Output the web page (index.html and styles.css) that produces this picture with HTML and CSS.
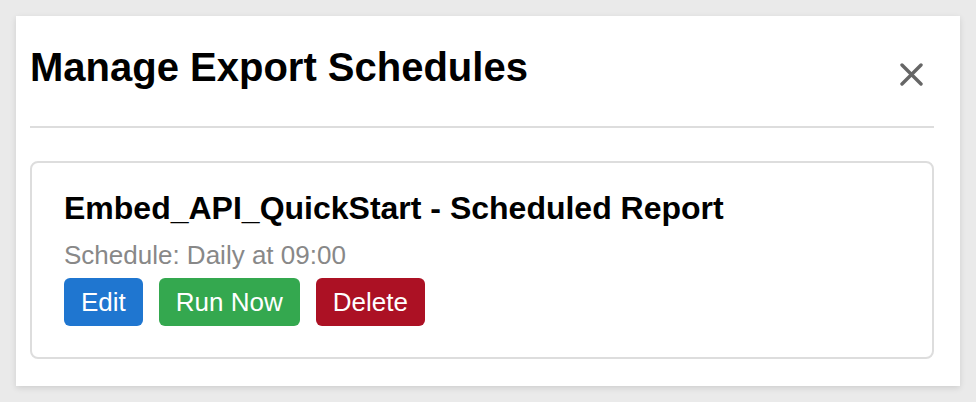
FILE: index.html
```html
<!DOCTYPE html>
<html lang="en">
<head>
<meta charset="utf-8">
<title>Manage Export Schedules</title>
<link rel="stylesheet" href="styles.css">
</head>
<body>
  <div class="panel">
    <div class="panel-header">
      <h2 class="panel-title">Manage Export Schedules</h2>
      <button class="close-btn" aria-label="Close">
        <svg width="23" height="23" viewBox="0 0 23 23" aria-hidden="true">
          <path d="M2 2 L21 21 M21 2 L2 21" stroke="#666" stroke-width="3.4" stroke-linecap="round" fill="none"/>
        </svg>
      </button>
    </div>
    <hr class="divider">
    <div class="schedule-card">
      <h3 class="schedule-name">Embed_API_QuickStart - Scheduled Report</h3>
      <p class="schedule-info">Schedule: Daily at 09:00</p>
      <div class="actions">
        <button class="btn btn-edit">Edit</button>
        <button class="btn btn-run">Run Now</button>
        <button class="btn btn-delete">Delete</button>
      </div>
    </div>
  </div>
</body>
</html>
```
FILE: styles.css
```css
* { box-sizing: border-box; }

html, body {
  margin: 0;
  background: #eaeaea;
}

body {
  padding: 16px;
  font-family: "Liberation Sans", Arial, Helvetica, sans-serif;
  color: #000;
}

.panel {
  background: #fff;
  padding: 28px 26px 27px 14px;
  box-shadow: 0 2px 6px rgba(0, 0, 0, 0.12);
}

.panel-header {
  display: flex;
  justify-content: space-between;
  align-items: flex-start;
}

.panel-title {
  margin: 0;
  font-size: 40px;
  font-weight: bold;
  line-height: 46px;
}

.close-btn {
  background: none;
  border: 0;
  padding: 0;
  margin: 19px 11px 0 0;
  width: 23px;
  height: 23px;
  cursor: pointer;
  display: block;
}

.close-btn svg { display: block; }

.divider {
  border: 0;
  height: 2px;
  background: #dddddd;
  margin: 36px 0 33px 0;
}

.schedule-card {
  border: 2px solid #dddddd;
  border-radius: 8px;
  padding: 27px 32px 31px 32px;
}

.schedule-name {
  margin: 0;
  font-size: 32px;
  font-weight: bold;
  line-height: 37px;
}

.schedule-info {
  margin: 13px 0 0;
  font-size: 26px;
  line-height: 30px;
  color: #888;
}

.actions {
  display: flex;
  gap: 16px;
  margin-top: 8px;
}

.btn {
  font-family: "Liberation Sans", Arial, Helvetica, sans-serif;
  font-size: 26px;
  line-height: 30px;
  padding: 9px 17px;
  border: 0;
  border-radius: 6px;
  color: #fff;
  cursor: pointer;
}

.btn-edit { background: #1f76d0; }
.btn-run { background: #34a84f; }
.btn-delete { background: #ac1124; }
```
